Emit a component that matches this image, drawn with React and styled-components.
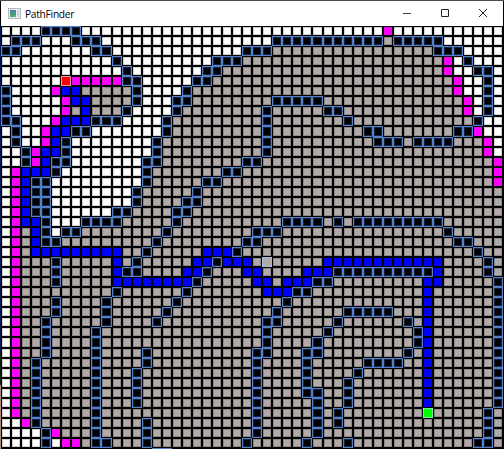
import React from 'react';
import styled, { createGlobalStyle, css } from 'styled-components';

const GlobalStyle = createGlobalStyle`
  body { margin: 0; background: #000; }
`;

const Window = styled.div`
  box-sizing: border-box;
  display: flex;
  flex-direction: column;
  width: 504px;
  height: 449px;
  overflow: hidden;
  border-top: 1px solid #474b52;
  background: #000;
  font-family: 'Open Sans', 'Noto Sans', sans-serif;
`;

const TitleBar = styled.header`
  box-sizing: border-box;
  display: flex;
  align-items: center;
  flex: 0 0 25px;
  margin: 0 1px;
  padding: 0 1px 1px 7px;
  background: #fff;
`;

const AppIcon = styled.svg`
  display: block;
  width: 13px;
  height: 11px;
`;

const Title = styled.h1`
  flex: 1;
  margin: 1px 0 0 4px;
  font-size: 10.2px;
  font-weight: 400;
  line-height: 14px;
  letter-spacing: -0.27px;
  color: #000;
`;

const WindowButton = styled.button`
  display: flex;
  align-items: center;
  justify-content: center;
  width: 38px;
  height: 24px;
  padding: 0;
  border: 0;
  background: transparent;
`;

const Board = styled.main`
  display: grid;
  flex: 1 1 0;
  min-height: 0;
  grid-template-columns: repeat(50, 10.06px);
  grid-auto-rows: 10.05px;
  align-content: start;
  overflow: hidden;
  border-left: 1px solid;
  border-image: linear-gradient(#00134a 0 76%, #06240a 78% 84.6%, #b08a7c 84.8%) 1;
`;

const fills = {
  w: ['#ffffff', '#d2d2d2'],
  '.': ['#b2aaa8', '#8d8785'],
  m: ['#ff00ff', '#f400f4'],
  b: ['#0000ff', '#0000f0'],
  r: ['#ff0000', '#e0a0b0'],
  g: ['#00ff00', '#80f0a0'],
  h: ['#b2aaa8', '#a5bbe8'],
};

const Cell = styled.div`
  box-sizing: border-box;
  ${(p) =>
    p.$kind === '#'
      ? css`
          border: 1px solid #5480c8;
          background: #000;
          box-shadow: inset 0 0 0 1px #142442;
        `
      : css`
          margin: ${'rgh'.includes(p.$kind) ? '0' : '1px'};
          border: 1px solid ${fills[p.$kind][1]};
          background: ${fills[p.$kind][0]};
        `}
`;

// Run-length rows: w unexplored, . visited, # wall, b path, m frontier,
// r start, g goal, h hovered.
const rows = [
  '4w4#30w1m11w',
  '1w3#3w3#17w11#1.5#6w',
  '2#7w2#13w3#16.3#4w',
  '11w1#9w3#20.1m1w1#3w',
  '12w1#7w2#22.1m2w2#1w',
  '6w1r5m2#5w2#24.1m2w1#1w',
  '1#4w1m2b5.1#4w1#26.1m2w1#1w',
  '1#5w1m2b4.1#3w2#8.5#14.1m1w1#1w',
  '1#5w1m1.1b3.1#4w1#8.1#5.2#12.1m1w1#1w',
  '2#3w1m3b3#4w1#9.1#7.1#12.1#2w',
  '1w1#2w1m2b2#7w1#9.1#9.2#7.2#1m2w',
  '1w1#2w1m1b1#8w1#10.1#10.3#1.4#3.1m1w',
  '2w1#1m2b1#8w1#10.1#21.1m1w',
  '2w1#1m1b2#7w2#8.2#23.1m',
  '1w1m3b1#8w1#7.2#25.1m',
  '1w1m1b2#9w1#5.2#27.1m',
  '1w1m1b2#8w1#5.1#30.',
  '1w1m1b2#8w1#4.2#30.',
  '1w1m1b2#6w2#4.2#31.',
  '1w1m2b1#3w4#5.1#10.4#1.1#1.9#6.',
  '1w1m1.1b1#1w2#8.1#8.3#16.1#5.',
  '1w1m1.1b2#9.1#8.2#19.2#3.',
  '1w1m1.9b2.1#5.3b1#23.1#2.',
  '1w1m3.1#5.1b1.1#5.2b1#3b1.1h5.12b4.1#1.',
  '1w1m3.1#5.1b2#4.2b1#3.2b4.3b10#1b4.1#1.',
  '1w1m3.1#5.8b1#5.2b1.3b2#9.2b5.1#',
  '1w1m9.1#6.1#7.3b2#11.1b6.1#',
  '1w1m3.1#4.1#6.1#10.1#13.1b6.1#',
  '1w1m3.1#4.1#5.1#10.1#6.5#3.1b6.1#',
  '1w1m2.1#5.1#4.1#10.2#5.1#6.1#1.1b6.1#',
  '1w1m2.1#4.1#16.1#5.1#8.1#1b6.1#',
  '1w1m2.1#4.1#16.1#4.1#9.1#1b6.1#',
  '1w1m2.1#4.1#4.1#10.2#3.2#8.1#1.1b6.1#',
  '1w1m1.1#5.1#4.1#10.1#4.1#5.4#2.1b6.1#',
  '1w1m1.1#5.1#3.1#11.1#4.1#4.1#6.1b6.1#',
  '1w1m1.1#5.1#3.1#11.1#4.1#3.1#7.1b6.1#',
  '1w1m1.1#5.1#3.1#11.1#4.2#2.1#7.1b6.1#',
  '1w1m1.1#5.1#3.1#11.1#5.1#2.1#7.1b6.1#',
  '1w1m1.1#5.1#15.1#5.1#1.1#8.1g5.1#1.',
  '2w1m1#5.1#4.1#10.1#5.1#1.1#14.1#1.',
  '4w1#1m3.1#4.1#10.1#5.1#16.1#1.',
  '4w1#1w2m1.2#3.1#9.1#5.1#3.1#12.2#1.',
  '15.2#33.',
];

const expand = (row) =>
  [...row.matchAll(/(\d+)(\D)/g)].flatMap(([, n, kind]) => Array(Number(n)).fill(kind));

const cells = rows.flatMap(expand);

export default function App() {
  return (
    <>
      <GlobalStyle />
      <Window>
        <TitleBar>
          <AppIcon viewBox="0 0 13 11">
            <rect x="0.5" y="0.5" width="12" height="10" fill="#eef0f2" stroke="#b3b7bb" />
            <defs>
              <linearGradient id="pane" x1="0" y1="0" x2="0.4" y2="1">
                <stop offset="0" stopColor="#4a78b0" />
                <stop offset="1" stopColor="#4fae72" />
              </linearGradient>
            </defs>
            <rect x="2" y="2" width="6" height="7" fill="url(#pane)" />
            <rect x="9" y="2" width="2" height="7" fill="#c9ced2" />
          </AppIcon>
          <Title>PathFinder</Title>
          <WindowButton aria-label="Minimize">
            <svg width="10" height="10" viewBox="0 0 10 10">
              <path d="M1 5.5h8" stroke="#444" fill="none" />
            </svg>
          </WindowButton>
          <WindowButton aria-label="Maximize">
            <svg width="10" height="10" viewBox="0 0 10 10">
              <path d="M1.5 1.5h7v7h-7z" stroke="#222" fill="none" />
            </svg>
          </WindowButton>
          <WindowButton aria-label="Close">
            <svg width="10" height="10" viewBox="0 0 10 10">
              <path d="M1 1l8 8M9 1l-8 8" stroke="#222" fill="none" />
            </svg>
          </WindowButton>
        </TitleBar>
        <Board>
          {cells.map((kind, i) => (
            <Cell key={i} $kind={kind} />
          ))}
        </Board>
      </Window>
    </>
  );
}
